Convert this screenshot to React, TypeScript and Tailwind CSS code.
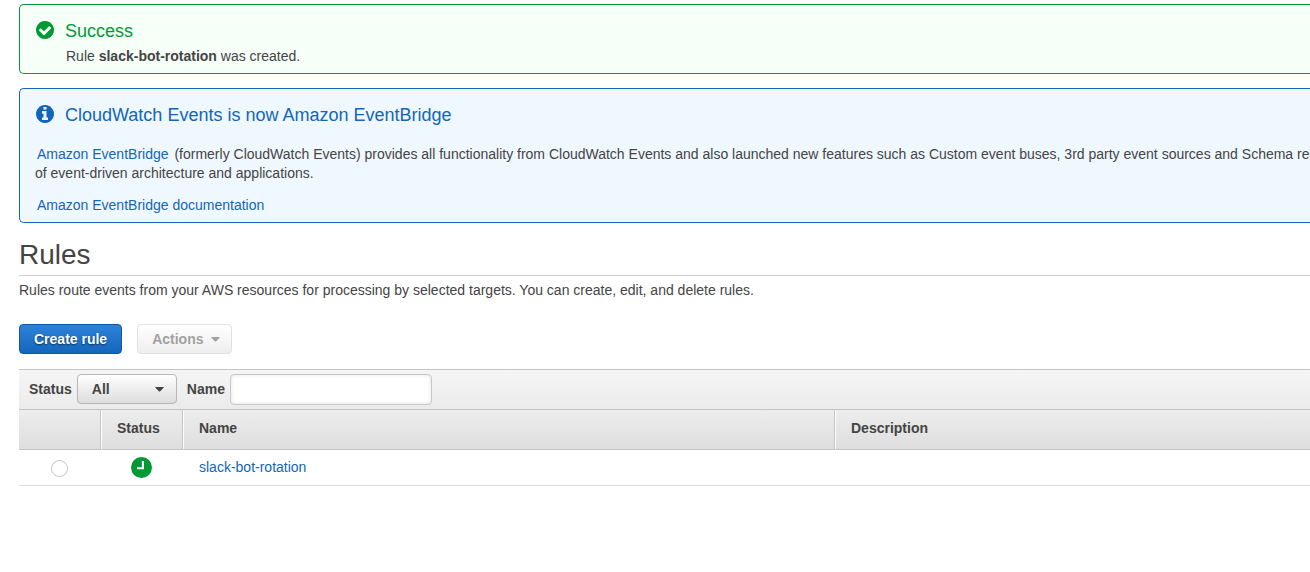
import type { ReactNode } from "react";

const DISC =
  "M1536 896q0 209-103 385.5t-279.5 279.5-385.5 103-385.5-103-279.5-279.5-103-385.5 103-385.5 279.5-279.5 385.5-103 385.5 103 279.5 279.5 103 385.5z";

function CheckIcon() {
  return (
    <svg viewBox="0 128 1536 1536" className="size-[18px] shrink-0" fill="currentColor" aria-hidden="true">
      <path d={DISC} />
      <path
        className="fill-[#f6fff8]"
        d="M1284 734q0-28-18-46l-91-90q-19-19-45-19t-45 19l-408 407-226-226q-19-19-45-19t-45 19l-91 90q-18 18-18 46 0 27 18 45l362 362q19 19 45 19 27 0 46-19l543-543q18-18 18-45z"
      />
    </svg>
  );
}

function InfoIcon() {
  return (
    <svg viewBox="0 128 1536 1536" className="size-[18px] shrink-0" fill="currentColor" aria-hidden="true">
      <path d={DISC} />
      <path
        className="fill-[#f0f8ff]"
        d="M1024 1376v-160q0-14-9-23t-23-9h-96v-512q0-14-9-23t-23-9h-320q-14 0-23 9t-9 23v160q0 14 9 23t23 9h96v320h-96q-14 0-23 9t-9 23v160q0 14 9 23t23 9h448q14 0 23-9t9-23z"
      />
      <path
        className="fill-[#f0f8ff]"
        d="M896 480v-160q0-14-9-23t-23-9h-192q-14 0-23 9t-9 23v160q0 14 9 23t23 9h192q14 0 23-9t9-23z"
      />
    </svg>
  );
}

function Caret({ className }: { className: string }) {
  return (
    <svg viewBox="0 0 9 5" className={className} fill="currentColor" aria-hidden="true">
      <path d="M.8 0h7.4q.9 0 .4.8L5.2 4.2q-.7.7-1.4 0L.4.8Q-.1 0 .8 0z" />
    </svg>
  );
}

function ClockIcon() {
  return (
    <svg viewBox="0 0 21 21" className="ml-[30px] size-[21px]" role="img" aria-label="Scheduled">
      <circle cx="10.5" cy="10.5" r="10.5" fill="#009933" />
      <path d="M11.9 3.9v7.3H6" fill="none" stroke="#fff" strokeWidth="2.1" />
    </svg>
  );
}

function HeaderCell({ children, first, last }: { children?: ReactNode; first?: boolean; last?: boolean }) {
  const base = "border-y border-[#c4c4c4] px-4 pb-1 text-left font-bold";
  const divider = last ? "" : "border-r";
  const highlight = first ? "" : "shadow-[inset_1px_0_0_#fff]";
  return (
    <th scope="col" className={`${base} ${divider} ${highlight}`}>
      {children}
    </th>
  );
}

export default function App() {
  return (
    <main className="overflow-hidden pt-1 pl-[19px] font-['Liberation_Sans',Arial,sans-serif] text-sm text-[#444]">
      <section className="rounded-l-[5px] border border-r-0 border-[#009933] bg-[#f6fff8] pt-4 pb-[7px] pl-4">
        <div className="flex gap-3 text-[#009933]">
          <CheckIcon />
          <h2 className="-ml-px text-lg leading-5">Success</h2>
        </div>
        <p className="mt-[5px] pl-[30px] leading-5">
          Rule <strong>slack-bot-rotation</strong> was created.
        </p>
      </section>

      <section className="mt-[14px] rounded-l-[5px] border border-r-0 border-[#1166bb] bg-[#f0f8ff] pt-4 pb-[7px] pl-4">
        <div className="flex gap-3 text-[#1166bb]">
          <InfoIcon />
          <h2 className="-ml-px text-lg leading-5">CloudWatch Events is now Amazon EventBridge</h2>
        </div>
        <p className="mt-5 -ml-px leading-[19px] whitespace-nowrap">
          <a href="#eventbridge" className="mx-0.5 text-[#1166bb]">Amazon EventBridge</a>{" "}
          (formerly CloudWatch Events) provides all functionality from CloudWatch Events and also launched new
          features such as Custom event buses, 3rd party event sources and Schema registry
          <br />
          of event-driven architecture and applications.
        </p>
        <p className="mt-3 pl-px leading-5">
          <a href="#documentation" className="text-[#1166bb]">Amazon EventBridge documentation</a>
        </p>
      </section>

      <h1 className="border-b border-[#ccc] pt-4 pb-1 text-[28px] leading-8">Rules</h1>
      <p className="mt-1 leading-5">
        Rules route events from your AWS resources for processing by selected targets. You can create, edit, and
        delete rules.
      </p>

      <div className="mt-6 flex gap-[15px]">
        <button
          type="button"
          className="h-[30px] rounded-[4px] border border-[#0f57a3] bg-linear-to-b from-[#2e82da] to-[#1166bb] px-[14px] font-bold text-white [text-shadow:0_1px_2px_#00000099]"
        >
          Create rule
        </button>
        <button
          type="button"
          disabled
          className="flex h-[30px] items-center gap-[7px] rounded-[4px] border border-[#e1e1e1] bg-linear-to-b from-white to-[#eeeeee] pr-[11px] pl-[14px] font-bold text-[#a1a1a1]"
        >
          Actions
          <Caret className="mt-px h-[5px] w-[9px]" />
        </button>
      </div>

      <form
        className="mt-[15px] flex h-10 items-center border-t border-[#c4c4c4] bg-linear-to-b from-[#f5f5f5] to-[#ebebeb] pb-px pl-[10px] font-bold"
        onSubmit={(event) => event.preventDefault()}
      >
        <label htmlFor="status">Status</label>
        <div className="relative ml-[5px]">
          <select
            id="status"
            className="block h-[30px] w-[100px] appearance-none rounded-[4px] border border-[#b7b7b7] bg-linear-to-b from-white to-[#dddddd] px-[14px] font-bold"
          >
            <option>All</option>
          </select>
          <Caret className="pointer-events-none absolute top-[13px] right-[13px] h-[5px] w-[9px]" />
        </div>
        <label htmlFor="name" className="ml-[10px]">Name</label>
        <input
          id="name"
          type="text"
          className="ml-[5px] h-[31px] w-[202px] rounded-[4px] border border-[#c8c8c8] bg-white px-2 font-normal shadow-[inset_0_0_4px_#0000001f]"
        />
      </form>

      <table className="w-full table-fixed border-separate border-spacing-0">
        <colgroup>
          <col className="w-[82px]" />
          <col className="w-[82px]" />
          <col className="w-[652px]" />
          <col />
        </colgroup>
        <thead>
          <tr className="h-[41px] bg-linear-to-b from-[#ededed] to-[#dedede]">
            <HeaderCell first />
            <HeaderCell>Status</HeaderCell>
            <HeaderCell>Name</HeaderCell>
            <HeaderCell last>Description</HeaderCell>
          </tr>
        </thead>
        <tbody>
          <tr className="h-9">
            <td className="border-b border-[#ddd] p-0">
              <input
                type="radio"
                name="rule"
                aria-label="Select slack-bot-rotation"
                className="mt-0.5 ml-8 block size-[17px] appearance-none rounded-full border border-[#c4c4c4] bg-white checked:border-[5px] checked:border-[#1166bb]"
              />
            </td>
            <td className="border-b border-[#ddd] p-0">
              <ClockIcon />
            </td>
            <td className="border-b border-[#ddd] px-4 pt-0 pb-0.5">
              <a href="#slack-bot-rotation" className="text-[#1166bb]">slack-bot-rotation</a>
            </td>
            <td className="border-b border-[#ddd] p-0" />
          </tr>
        </tbody>
      </table>
    </main>
  );
}
